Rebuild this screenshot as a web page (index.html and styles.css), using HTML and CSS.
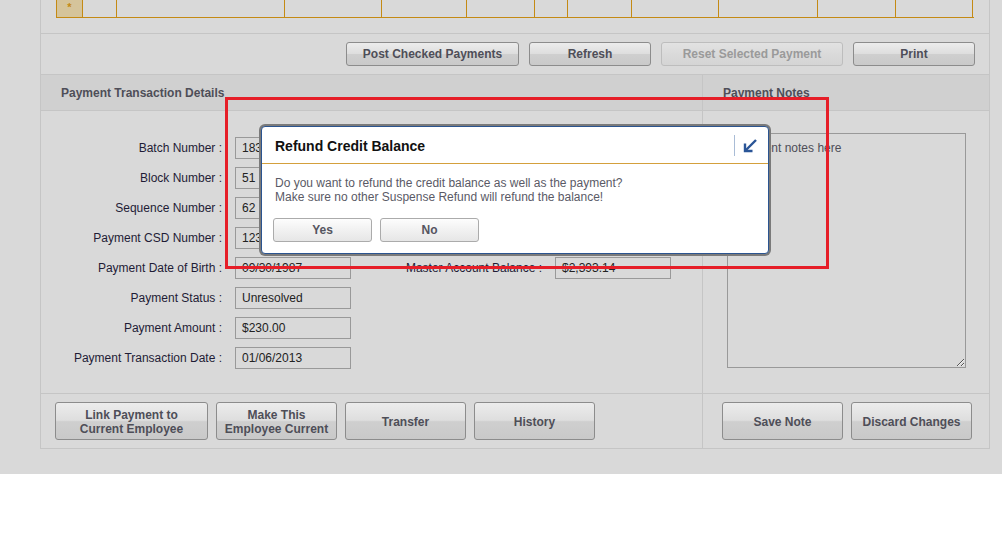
FILE: index.html
```html
<!DOCTYPE html>
<html>
<head>
<meta charset="utf-8">
<title>Payment Transaction</title>
<link rel="stylesheet" href="styles.css">
</head>
<body>
<div class="page">
  <div class="panel">
    <div class="grid-area">
      <div class="grid-row">
        <div class="cell new-row" style="width:26px">*</div>
        <div class="cell" style="width:34px"></div>
        <div class="cell" style="width:168px"></div>
        <div class="cell" style="width:97px"></div>
        <div class="cell" style="width:85px"></div>
        <div class="cell" style="width:68px"></div>
        <div class="cell" style="width:33px"></div>
        <div class="cell" style="width:64px"></div>
        <div class="cell" style="width:87px"></div>
        <div class="cell" style="width:99px"></div>
        <div class="cell" style="width:78px"></div>
        <div class="cell" style="width:77px"></div>
      </div>
    </div>
    <div class="toolbar">
      <button class="btn w173">Post Checked Payments</button>
      <button class="btn w122">Refresh</button>
      <button class="btn w182" disabled>Reset Selected Payment</button>
      <button class="btn w122">Print</button>
    </div>
    <div class="details">
      <div class="col left">
        <div class="col-head">Payment Transaction Details</div>
        <div class="col-body">
          <div class="form">
            <label>Batch Number :</label><div class="field">183</div><div></div><div></div>
            <label>Block Number :</label><div class="field">51</div><div></div><div></div>
            <label>Sequence Number :</label><div class="field">62</div><div></div><div></div>
            <label>Payment CSD Number :</label><div class="field">123</div><div></div><div></div>
            <label>Payment Date of Birth :</label><div class="field">09/30/1987</div><label>Master Account Balance :</label><div class="field">$2,393.14</div>
            <label>Payment Status :</label><div class="field">Unresolved</div><div></div><div></div>
            <label>Payment Amount :</label><div class="field">$230.00</div><div></div><div></div>
            <label>Payment Transaction Date :</label><div class="field">01/06/2013</div><div></div><div></div>
          </div>
        </div>
        <div class="col-foot">
          <button class="btn big w153">Link Payment to<br>Current Employee</button>
          <button class="btn big w121">Make This<br>Employee Current</button>
          <button class="btn big w121">Transfer</button>
          <button class="btn big w121">History</button>
        </div>
      </div>
      <div class="col right">
        <div class="col-head">Payment Notes</div>
        <div class="col-body notes-body">
          <textarea class="notes" placeholder="Payment notes here"></textarea>
        </div>
        <div class="col-foot">
          <button class="btn big w121">Save Note</button>
          <button class="btn big w121">Discard Changes</button>
        </div>
      </div>
    </div>
  </div>

  <div class="dialog">
    <div class="dlg-head">
      <div class="dlg-title">Refund Credit Balance</div>
      <div class="dlg-sep"></div>
      <svg class="dlg-icon" width="16" height="16" viewBox="0 0 16 16">
        <path d="M14 2 L3.5 12.5" stroke="#2a5597" stroke-width="2.4" fill="none"/>
        <path d="M3 5.5 V13 H10.5" stroke="#2a5597" stroke-width="2.4" fill="none"/>
      </svg>
    </div>
    <div class="dlg-body">
      <p class="dlg-msg">Do you want to refund the credit balance as well as the payment?<br>Make sure no other Suspense Refund will refund the balance!</p>
      <div class="dlg-actions">
        <button class="dbtn">Yes</button>
        <button class="dbtn">No</button>
      </div>
    </div>
  </div>
  <div class="highlight"></div>
</div>
</body>
</html>
```

FILE: styles.css
```css
* { box-sizing: border-box; }
html, body { margin: 0; padding: 0; background: #ffffff; }
body {
  font-family: "Liberation Sans", Arial, sans-serif;
  font-size: 12px;
  color: #222;
}
.page {
  position: relative;
  width: 1002px;
  background: #d9d9d9;
  padding: 0 0 25px 40px;
}
.panel {
  width: 950px;
  border-left: 1px solid #c5c5c5;
  border-right: 1px solid #c5c5c5;
  border-bottom: 1px solid #c5c5c5;
}
.grid-area {
  height: 34px;
  padding: 0 15px;
  border-bottom: 1px solid #c5c5c5;
}
.grid-row {
  display: flex;
  height: 18px;
  width: 918px;
  border-left: 1px solid #c48a14;
  border-bottom: 1px solid #c48a14;
}
.cell {
  height: 17px;
  border-right: 1px solid #c48a14;
  flex: none;
}
.new-row {
  background: #d5c49b;
  color: #c48a14;
  text-align: center;
  font-size: 11px;
  line-height: 14px;
  font-weight: bold;
}
.toolbar {
  height: 41px;
  display: flex;
  justify-content: flex-end;
  gap: 10px;
  padding: 8px 14px 0 0;
  border-bottom: 1px solid #c5c5c5;
}
.btn {
  font-family: "Liberation Sans", Arial, sans-serif;
  font-size: 12px;
  font-weight: bold;
  color: #4e4e58;
  height: 24px;
  padding: 0;
  border: 1px solid #8c8c8c;
  border-radius: 3px;
  background: linear-gradient(to bottom, #ececec 0%, #dedede 48%, #cfcfcf 52%, #c9c9c9 100%);
  flex: none;
  line-height: 14px;
}
.btn:disabled {
  color: #9a9a9a;
  border-color: #bdbdbd;
  background: linear-gradient(to bottom, #e2e2e2 0%, #dadada 50%, #d4d4d4 100%);
}
.btn.big { height: 38px; padding-top: 2px; }
.w173 { width: 173px; }
.w122 { width: 122px; }
.w182 { width: 182px; }
.w153 { width: 153px; }
.w121 { width: 121px; }

.details {
  display: grid;
  grid-template-columns: 661px 287px;
}
.col { display: flex; flex-direction: column; }
.col.right { border-left: 1px solid #c5c5c5; }
.col-head {
  height: 36px;
  background: #d0d0d0;
  border-bottom: 1px solid #c5c5c5;
  font-weight: bold;
  color: #4e4e58;
  padding: 11px 0 0 20px;
  line-height: 14px;
}
.col-body {
  height: 283px;
  border-bottom: 1px solid #c5c5c5;
  padding-top: 26px;
}
.form {
  display: grid;
  grid-template-columns: 184px 116px 184px 116px;
  column-gap: 10px;
  row-gap: 8px;
  grid-auto-rows: 22px;
}
.form label {
  text-align: right;
  padding-right: 3px;
  line-height: 22px;
  color: #1f1c36;
  white-space: nowrap;
}
.field {
  border: 1px solid #999999;
  line-height: 20px;
  padding-left: 6px;
  color: #222;
}
.col-foot {
  height: 54px;
  display: flex;
  gap: 8px;
  padding: 8px 0 0 14px;
}
.col.right .col-foot { padding-left: 19px; }
.notes-body { padding: 22px 0 0 24px; }
.notes {
  display: block;
  width: 239px;
  height: 235px;
  margin: 0;
  border: 1px solid #999999;
  background: #d9d9d9;
  font-family: "Liberation Sans", Arial, sans-serif;
  font-size: 12px;
  padding: 7px 6px;
  resize: both;
}
.notes::placeholder { color: #4e4e58; opacity: 1; }

.dialog {
  position: absolute;
  left: 261px;
  top: 126px;
  width: 508px;
  height: 128px;
  background: #ffffff;
  border: 1px solid #2b5490;
  border-radius: 4px;
  box-shadow: 0 0 0 2px #7a7a7a;
}
.dlg-head {
  height: 37px;
  border-bottom: 1px solid #d4a03c;
  display: flex;
  align-items: center;
  padding: 1px 10px 0 13px;
}
.dlg-title {
  flex: 1;
  font-size: 14px;
  font-weight: bold;
  color: #111;
}
.dlg-sep {
  width: 1px;
  height: 21px;
  background: #a9bcd6;
  margin-right: 7px;
}
.dlg-icon { display: block; }
.dlg-body { padding: 12px 0 0 11px; }
.dlg-msg {
  margin: 0 0 0 2px;
  font-size: 12px;
  line-height: 14px;
  color: #5a5a66;
}
.dlg-actions {
  display: flex;
  gap: 8px;
  margin-top: 14px;
}
.dbtn {
  width: 99px;
  height: 24px;
  padding: 0;
  font-family: "Liberation Sans", Arial, sans-serif;
  font-size: 12px;
  font-weight: bold;
  color: #555560;
  border: 1px solid #ababab;
  border-radius: 3px;
  background: linear-gradient(to bottom, #fdfdfd 0%, #f1f1f1 50%, #e6e6e6 100%);
}
.highlight {
  position: absolute;
  left: 225px;
  top: 97px;
  width: 604px;
  height: 172px;
  border: 3px solid #e61e28;
  pointer-events: none;
}
```
